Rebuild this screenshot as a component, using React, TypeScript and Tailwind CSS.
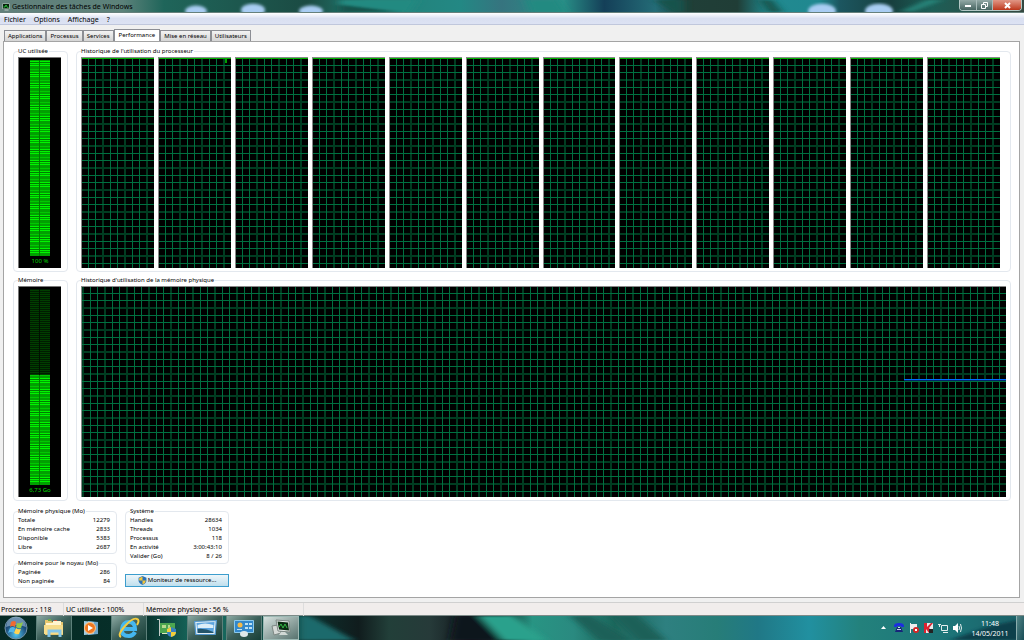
import React from 'react';

const cpuCount = 12;

const tabs = ['Applications', 'Processus', 'Services', 'Performance', 'Mise en réseau', 'Utilisateurs'];

const physical = [
  ['Totale', '12279'],
  ['En mémoire cache', '2833'],
  ['Disponible', '5383'],
  ['Libre', '2687'],
];

const kernel = [
  ['Paginée', '286'],
  ['Non paginée', '84'],
];

const system = [
  ['Handles', '28634'],
  ['Threads', '1034'],
  ['Processus', '118'],
  ['En activité', '3:00:43:10'],
  ['Valider (Go)', '8 / 26'],
];

function Group({ title, className = '', children }: { title: string; className?: string; children: React.ReactNode }) {
  return (
    <fieldset className={`min-w-0 rounded-sm border border-[#e3e8ee] ${className}`}>
      <legend className="h-2 pr-px leading-2 whitespace-nowrap">{title}</legend>
      {children}
    </fieldset>
  );
}

function Grid({ id, shift = 0 }: { id: string; shift?: number }) {
  return (
    <svg className="block h-full w-full" aria-hidden="true">
      <defs>
        <pattern id={id} x={shift} width="22" height="22" patternUnits="userSpaceOnUse">
          <path d="M21 0v22M0 21h22" stroke="#003c21" strokeWidth="2" />
          <path d="M6.5 0v22M13.5 0v22M0 6.5h22M0 13.5h22" stroke="#007040" />
        </pattern>
      </defs>
      <rect width="100%" height="100%" fill={`url(#${id})`} />
    </svg>
  );
}

// LED style gauge: dim segments on top, lit segments up to the value
function Meter({ id, value, label }: { id: string; value: number; label: string }) {
  const lit = Math.round(value * 196);
  return (
    <div className="flex h-[211px] flex-col items-center border-t border-l border-[#777] bg-black pt-0.5 text-[#00d800]">
      <svg className="block h-[196px] w-5" viewBox="0 0 20 196" aria-hidden="true">
        <defs>
          <pattern id={`${id}-on`} width="20" height="11" patternUnits="userSpaceOnUse">
            <path fill="#00a000" d="M0 0h20v11H0z" />
            <path fill="#00f500" d="M0 1h20v1H0zM0 3h20v1H0zM0 5h20v1H0z" />
            <path fill="#00c800" d="M0 9h20v1H0z" />
            <path fill="#007a00" d="M9 0h1v11H9zM0 2h20v1H0z" />
          </pattern>
          <pattern id={`${id}-off`} width="20" height="4" patternUnits="userSpaceOnUse">
            <path fill="#001c00" d="M0 0h20v4H0z" />
            <path fill="#003e00" d="M0 1h20v1H0zM0 3h20v1H0z" />
            <path fill="#001000" d="M9 0h1v4H9z" />
          </pattern>
        </defs>
        <rect width="20" height="196" fill={`url(#${id}-off)`} />
        <rect y={196 - lit} width="20" height={lit} fill={`url(#${id}-on)`} />
      </svg>
      <div className="leading-[11px] whitespace-nowrap">{label}</div>
    </div>
  );
}

function Stats({ rows }: { rows: string[][] }) {
  return (
    <table className="mt-px w-full">
      <tbody>
        {rows.map(([name, value]) => (
          <tr key={name}>
            <th scope="row" className="h-[9px] text-left leading-[9px] font-normal whitespace-nowrap">{name}</th>
            <td className="h-[9px] pr-0.5 text-right leading-[9px] whitespace-nowrap">{value}</td>
          </tr>
        ))}
      </tbody>
    </table>
  );
}

function Shield() {
  return (
    <svg className="h-[9px] w-[9px]" viewBox="0 0 16 16" aria-hidden="true">
      <path fill="#2c72b8" d="M8 0 15 3v5q0 5-7 8Q1 13 1 8V3z" />
      <path fill="#f2c53a" d="M8 1v7h6q0 4-6 7V8H2V4z" />
    </svg>
  );
}

function Wallpaper() {
  return (
    <svg className="absolute inset-0 h-full w-full" viewBox="0 0 1024 13" preserveAspectRatio="none" aria-hidden="true">
      <defs>
        <filter id="soft"><feGaussianBlur stdDeviation="5 1" /></filter>
        <filter id="glow"><feGaussianBlur stdDeviation="1.5" /></filter>
        <linearGradient id="leaf">
          <stop offset="0" stopColor="#62807b" />
          <stop offset=".12" stopColor="#5c827a" />
          <stop offset=".16" stopColor="#1f655a" />
          <stop offset=".3" stopColor="#1b4b43" />
          <stop offset=".36" stopColor="#238077" />
          <stop offset=".45" stopColor="#238884" />
          <stop offset=".49" stopColor="#36747f" />
          <stop offset=".55" stopColor="#298f87" />
          <stop offset=".59" stopColor="#143f58" />
          <stop offset=".64" stopColor="#246c77" />
          <stop offset=".67" stopColor="#203f38" />
          <stop offset=".72" stopColor="#203d36" />
          <stop offset=".75" stopColor="#218a90" />
          <stop offset=".8" stopColor="#208890" />
          <stop offset=".82" stopColor="#1c5660" />
          <stop offset=".87" stopColor="#173f3e" />
          <stop offset=".91" stopColor="#1d5e56" />
          <stop offset="1" stopColor="#344740" />
        </linearGradient>
      </defs>
      <path fill="url(#leaf)" d="M0 0h1024v13H0z" />
      <g filter="url(#soft)">
        <path fill="#218a81" d="M340 0h78l-8 13h-70zM525 0h34l8 13h-37z" />
        <path fill="#14534b" d="m340 5 60 8h-60zM655 0h29v13h-12zM760 0h12l10 13h-14z" />
        <path fill="#28857a" d="m902 12 25-12h15l-30 13z" />
      </g>
      <g fill="#a9cdf3" filter="url(#glow)">
        <ellipse cx="196" cy="12" rx="11" ry="6" />
        <ellipse cx="253" cy="11" rx="12" ry="7" />
        <ellipse cx="311" cy="12" rx="12" ry="6" />
        <ellipse cx="822" cy="12" rx="14" ry="8" />
        <ellipse cx="879" cy="12" rx="14" ry="8" />
      </g>
    </svg>
  );
}

function TitleBar() {
  return (
    <header className="relative h-[13px] overflow-hidden border-b border-[#66807c]">
      <Wallpaper />
      <div className="relative flex h-full items-start justify-between">
        <div className="flex h-full items-center gap-0.5 pt-px pl-0.5">
          <svg className="h-2 w-2" viewBox="0 0 16 16" aria-hidden="true">
            <path fill="#bdc9c3" d="M1 1h14v11H1zM5 13h8v2H5z" />
            <path fill="#06240c" d="M2 2h12v9H2z" />
            <path fill="none" stroke="#27c43a" strokeWidth="2" d="M3 8h3l2-4 3 5h2" />
          </svg>
          <h1 className="text-[7px] leading-[12px]">Gestionnaire des tâches de Windows</h1>
        </div>
        <div className="mr-0.5 flex h-[11px] overflow-hidden rounded-b-sm border border-t-0 border-[#b4c8c6] text-white">
          <button aria-label="Réduire" className="flex w-[17px] items-center justify-center border-r border-[#a7bbb9] bg-linear-to-b from-[#93a9a6] to-[#486662]">
            <span className="mt-0.5 h-0.5 w-1.5 bg-white" />
          </button>
          <button aria-label="Restaurer" className="flex w-4 items-center justify-center border-r border-[#a7bbb9] bg-linear-to-b from-[#93a9a6] to-[#486662]">
            <svg className="h-[7px] w-[7px]" viewBox="0 0 7 7" aria-hidden="true">
              <path fill="none" stroke="#fff" d="M2.5 2V.5h4v4H5M.5 2.5h4v4h-4z" />
            </svg>
          </button>
          <button aria-label="Fermer" className="flex w-7 items-center justify-center bg-linear-to-b from-[#e09685] to-[#bc3518]">
            <svg className="h-[7px] w-[7px]" viewBox="0 0 7 7" aria-hidden="true">
              <path fill="none" stroke="#fff" strokeWidth="2" d="m1 1 5 5M6 1 1 6" />
            </svg>
          </button>
        </div>
      </div>
    </header>
  );
}

const taskButton = 'flex w-9 items-center justify-center border-x border-[#5d807a] bg-linear-to-br from-[#8ca9a3] via-[#3b5f59] to-[#173f38]';

function TaskBar() {
  return (
    <footer className="relative flex h-6 items-stretch justify-between overflow-hidden bg-[#052923]">
      <svg className="absolute inset-0 h-full w-full" viewBox="0 0 1024 24" preserveAspectRatio="none" aria-hidden="true">
        <defs>
          <filter id="haze"><feGaussianBlur stdDeviation="4 1" /></filter>
          <linearGradient id="desk">
            <stop offset="0" stopColor="#052923" />
            <stop offset=".14" stopColor="#07302a" />
            <stop offset=".2" stopColor="#1a7468" />
            <stop offset=".28" stopColor="#0d3b36" />
            <stop offset=".35" stopColor="#101c1d" />
            <stop offset=".38" stopColor="#223f39" />
            <stop offset=".42" stopColor="#263a39" />
            <stop offset=".46" stopColor="#11181d" />
            <stop offset=".49" stopColor="#12302d" />
            <stop offset=".52" stopColor="#289483" />
            <stop offset=".56" stopColor="#2a8a80" />
            <stop offset=".6" stopColor="#1d675c" />
            <stop offset=".65" stopColor="#2e8080" />
            <stop offset=".7" stopColor="#277d78" />
            <stop offset=".74" stopColor="#207886" />
            <stop offset=".79" stopColor="#2190a0" />
            <stop offset=".84" stopColor="#23817c" />
            <stop offset=".93" stopColor="#1c7478" />
            <stop offset="1" stopColor="#1c5f66" />
          </linearGradient>
        </defs>
        <path fill="url(#desk)" d="M0 0h1024v24H0z" />
        <g filter="url(#haze)">
          <path fill="#1b6a6c" d="M298 0h12l44 24h-56z" />
          <path fill="#11181d" d="M455 0h20l25 24h-50z" />
          <path fill="#2aa18c" d="M478 0h36l32 24h-44z" />
          <path fill="#1a6158" d="M570 0h22l38 24h-32zM612 0h26l28 24h-30z" />
          <path fill="#0d3f4c" d="m950 24 40-14 34-7v21z" />
        </g>
      </svg>
      <nav aria-label="Barre des tâches" className="relative flex">
        <button aria-label="Démarrer" className="flex w-9 items-center pl-1">
          <svg className="h-6 w-6" viewBox="0 0 24 24" aria-hidden="true">
            <defs>
              <radialGradient id="orb" cy=".8"><stop stopColor="#51c5ef" /><stop offset="1" stopColor="#1a4976" /></radialGradient>
            </defs>
            <circle cx="12" cy="12" r="11" fill="url(#orb)" stroke="#7393a7" />
            <path fill="#b9d3e5" opacity=".5" d="M2 11a10 10 0 0 1 20 0q-10-4-20 0" />
            <path fill="#f06a31" d="M7 6q3-2 5 0l-1 5q-3-2-5 0z" />
            <path fill="#91c84a" d="M13 7q3 1 6-1l-2 6q-2 1-5-1z" />
            <path fill="#51b5ea" d="M6 12q3-2 5 0l-1 5q-3-2-6 0z" />
            <path fill="#ffd353" d="M12 12q2 2 5 1l-2 5q-2 1-5-1z" />
          </svg>
        </button>
        <button aria-label="Explorateur" className={`${taskButton} mr-[3px]`}>
          <svg className="h-5 w-5" viewBox="0 0 20 20" aria-hidden="true">
            <path fill="#e6c66d" d="M1 4V2h6l1 2h11v13H1z" />
            <path fill="#fff5cf" d="M2 5h7V3h8v12H2z" />
            <path fill="#f6dc8b" d="M0 7h19v9H0z" />
            <path fill="#69a84d" d="M4 1h3v2H4z" /><path fill="#c7543c" d="M10 2h3v1h-3z" />
            <path fill="none" stroke="#83c5e9" strokeWidth="3" d="M5 19v-6h11v6" />
          </svg>
        </button>
        <button aria-label="Lecteur multimédia" className="flex w-8 items-center justify-center">
          <svg className="h-4 w-4" viewBox="0 0 16 16" aria-hidden="true">
            <path fill="#6da5c8" d="m5 1 10 1v12L5 15z" /><path fill="#a2cbdf" d="m1 1 10 1v12L1 15z" />
            <circle cx="7" cy="8" r="5.5" fill="#f07820" stroke="#ffc487" /><path fill="#fff" d="m5 5 5 3-5 3z" />
          </svg>
        </button>
        <button aria-label="Internet Explorer" className={`${taskButton} ml-1`}>
          <svg className="h-[22px] w-[22px]" viewBox="0 0 22 22" aria-hidden="true">
            <path fill="none" stroke="#45b7ef" strokeWidth="4" d="M5 12h12q0-7-6-7t-7 7 7 7q4 0 6-4" />
            <path fill="none" stroke="#f2cc42" strokeWidth="2" d="M3 20Q-1 18 7 9T19 2q3 1 0 6" />
          </svg>
        </button>
        <button aria-label="Matériel" className="flex w-10 items-center justify-center">
          <svg className="h-5 w-5" viewBox="0 0 20 20" aria-hidden="true">
            <path fill="none" stroke="#c5cdc9" d="M0 1.500h2.500V18" />
            <path fill="#4ca650" d="M3 5h15v10H3z" /><path fill="#b7dc8e" d="M5 7h4v3H5zM11 7h2v3h-2z" />
            <path fill="#dfe8c0" d="M5 15h7v1H5z" />
            <path fill="#377fc2" d="m14 9 5 2v3q0 4-5 5-4-1-4-5v-3z" />
            <path fill="#f0cf38" d="M14 9v5h5q0 4-5 5v-5h-4v-3z" />
          </svg>
        </button>
        <button aria-label="Images" className={`${taskButton} mr-[3px]`}>
          <svg className="h-[17px] w-[23px]" viewBox="0 0 19 17" preserveAspectRatio="none" aria-hidden="true">
            <path fill="#e2eef4" stroke="#5297ce" d="M.5 1.500 18.500.5 17.500 14.500h-16z" />
            <path fill="#5ba4df" d="m2 3 15-1-1 11H3z" /><path fill="#dceef8" d="M3 5q6-3 13 0v3H3z" /><path fill="#24556b" d="M3 9q6-1 13 3v1H3z" />
          </svg>
        </button>
        <button aria-label="Panneau de configuration" className={`${taskButton} mr-px`}>
          <svg className="h-[18px] w-5" viewBox="0 0 20 18" aria-hidden="true">
            <path fill="#3388cb" stroke="#8ac9ed" d="M.5 1.500h19v12H.5z" />
            <circle cx="6" cy="6" r="2.5" fill="#f5b947" /><path fill="#bde1f3" d="M11 4h3v2h-3zM15 4h3v2h-3zM11 8h3v2h-3zM15 8h3v2h-3zM3 10h5v1H3z" />
            <ellipse cx="10" cy="15" rx="4" ry="3" fill="#dfe7e9" />
          </svg>
        </button>
        <button aria-label="Gestionnaire des tâches" className="flex w-9 items-center justify-center border border-[#9bb8b3] bg-linear-to-br from-[#d7e2df] to-[#58736f]">
          <svg className="h-[18px] w-5" viewBox="0 0 20 18" aria-hidden="true">
            <path fill="#d5d9d6" stroke="#7c8783" d="m1 7 6-1 3 8-7 2z" />
            <path fill="#e5eae8" stroke="#7c8783" d="m5 1 13 1 1 11-12-1z" />
            <path fill="#0b2c12" d="m6.500 2.500 10.500 1 1 8-10-1z" /><path fill="none" stroke="#37b846" d="m8 8 2-3 2 4 2-4 2 4" />
            <path fill="#d1d9d5" d="M10 13h4l3 3H8z" />
          </svg>
        </button>
      </nav>
      <div className="relative flex items-center text-white">
        <svg className="mr-2 h-3 w-[84px]" viewBox="0 0 84 12" aria-label="Zone de notification" role="img">
          <path fill="#fff" d="m3 7 2.5-3L8 7z" />
          <path fill="#1c2ee0" d="M16 4q0-3 5-3t5 3v1h-3V4h-4v1h-3z" /><path fill="#16247a" d="M19 5h4l2 5h-8z" /><path fill="#c9d7f0" d="M19 7h4v1h-4zM20 5h2v1h-2z" />
          <path fill="#eee" d="M32 1h1v10h-1zM33 2h6v5h-6z" /><circle cx="38" cy="8" r="3" fill="#d72626" /><path stroke="#fff" d="m37 7 2 2m0-2-2 2" />
          <path fill="#e9e9e9" d="M46 1h9v10h-9z" /><path fill="#dc2330" d="M46 1h3v4l4-4h2l-4 5 4 5h-4l-3-4v4h-2z" /><path fill="#222" d="M51 7h4v4h-4z" />
          <path fill="none" stroke="#e5eeee" d="M63.500 3.500h6v5h-6zM65 10.500h5M61.500 2v3M60 2.500h3" />
          <path fill="#fff" d="M75 4h2l3-3v10l-3-3h-2z" /><path fill="none" stroke="#e5eeee" d="M81 4q1 2 0 4M82.500 2q2 4 0 8" />
        </svg>
        <time className="mr-[6px] w-10 pt-px text-center text-[7px] leading-[10px]">
          <span className="block">11:48</span>
          <span className="block">14/05/2011</span>
        </time>
        <button aria-label="Afficher le bureau" className="h-full w-2 border-l border-[#8aadae] bg-linear-to-br from-[#528587] to-[#164c55]" />
      </div>
    </footer>
  );
}

export default function App() {
  return (
    <div className="flex min-h-screen flex-col bg-[#f0f0f0] font-['Noto_Sans',sans-serif] text-[6px] text-black">
      <TitleBar />
      <nav aria-label="Menu" className="flex h-3 items-center gap-2 border-b border-[#c0c7dc] bg-linear-to-b from-white via-[#d9dff1] to-[#dce2f3] pt-0.5 pl-1 text-[7px]">
        {['Fichier', 'Options', 'Affichage', '?'].map((item) => (
          <button key={item} className="leading-[9px]">{item}</button>
        ))}
      </nav>
      <div className="flex flex-1 flex-col pt-1 pr-1 pl-[3px]">
        <div role="tablist" className="flex h-3 items-end pl-px">
          {tabs.map((tab) => (
            <button
              key={tab}
              role="tab"
              aria-selected={tab === 'Performance'}
              className={
                tab === 'Performance'
                  ? 'h-3 border border-b-0 border-[#8c8e94] bg-white px-1 leading-[9px]'
                  : 'h-[11px] border border-b-0 border-[#8c8e94] bg-linear-to-b from-[#f3f3f3] to-[#d5d5d5] px-[3px] leading-[10px]'
              }
            >
              {tab}
            </button>
          ))}
        </div>
        <main className="flex-1 border border-[#a4a4a4] bg-white pt-[5px] pr-2 pl-[9px]">
          <div className="flex flex-col gap-1">
            <section className="flex h-[225px] gap-2">
              <Group title="UC utilisée" className="h-full w-[55px] px-1">
                <div className="pt-0.5 pr-[2px]"><Meter id="cpu" value={1} label="100 %" /></div>
              </Group>
              <Group title="Historique de l'utilisation du processeur" className="h-full flex-1 pr-[10px] pl-1">
                <div className="flex h-[213px] gap-1 pt-0.5">
                  {Array.from({ length: cpuCount }, (_, i) => (
                    <div key={i} className="relative min-w-0 flex-1 border-t border-l border-[#888] bg-black">
                      <div className="h-full border-t border-[#00b400]"><Grid id={`core-${i}`} /></div>
                      {i === 1 && <span className="absolute top-px right-1 h-1 w-0.5 bg-[#00a000]" />}
                    </div>
                  ))}
                </div>
              </Group>
            </section>
            <section className="flex h-[225px] gap-2">
              <Group title="Mémoire" className="h-full w-[55px] px-1">
                <div className="pt-0.5 pr-[2px]"><Meter id="memory" value={0.56} label="6,73 Go" /></div>
              </Group>
              <Group title="Historique d'utilisation de la mémoire physique" className="h-full flex-1 px-1">
                <div className="pt-0.5">
                  <div className="relative h-[211px] border-t border-l border-[#888] bg-black">
                    <Grid id="ram" shift={2} />
                    <div className="absolute top-[92px] right-0 h-0.5 w-[11%] border-t border-[#006cff] bg-[#00266b]" />
                  </div>
                </div>
              </Group>
            </section>
          </div>
          <div className="flex gap-2 pt-[6px]">
            <div className="flex w-[104px] flex-col gap-[5px]">
              <Group title="Mémoire physique (Mo)" className="px-1 pb-px"><Stats rows={physical} /></Group>
              <Group title="Mémoire pour le noyau (Mo)" className="px-1 pb-px"><Stats rows={kernel} /></Group>
            </div>
            <div className="w-[104px]">
              <Group title="Système" className="px-1 pb-0.5"><Stats rows={system} /></Group>
              <button className="mt-[10px] flex h-[13px] w-full items-center justify-center gap-px border border-[#3c9dcd] bg-linear-to-b from-[#eef6fa] to-[#bfdfed]">
                <Shield />
                Moniteur de ressource...
              </button>
            </div>
          </div>
        </main>
      </div>
      <div role="status" className="mt-1 flex h-[14px] items-center border-t border-b border-t-[#d0d0d0] border-b-[#7d8a88] bg-[#f1edec] text-[7px] leading-[12px]">
        <span className="w-16 border-r border-[#ddd] pt-px pl-px">Processus : 118</span>
        <span className="w-20 border-r border-[#ddd] pt-px pl-0.5">UC utilisée : 100%</span>
        <span className="w-40 border-r border-[#ddd] pt-px pl-0.5">Mémoire physique : 56 %</span>
      </div>
      <TaskBar />
    </div>
  );
}
